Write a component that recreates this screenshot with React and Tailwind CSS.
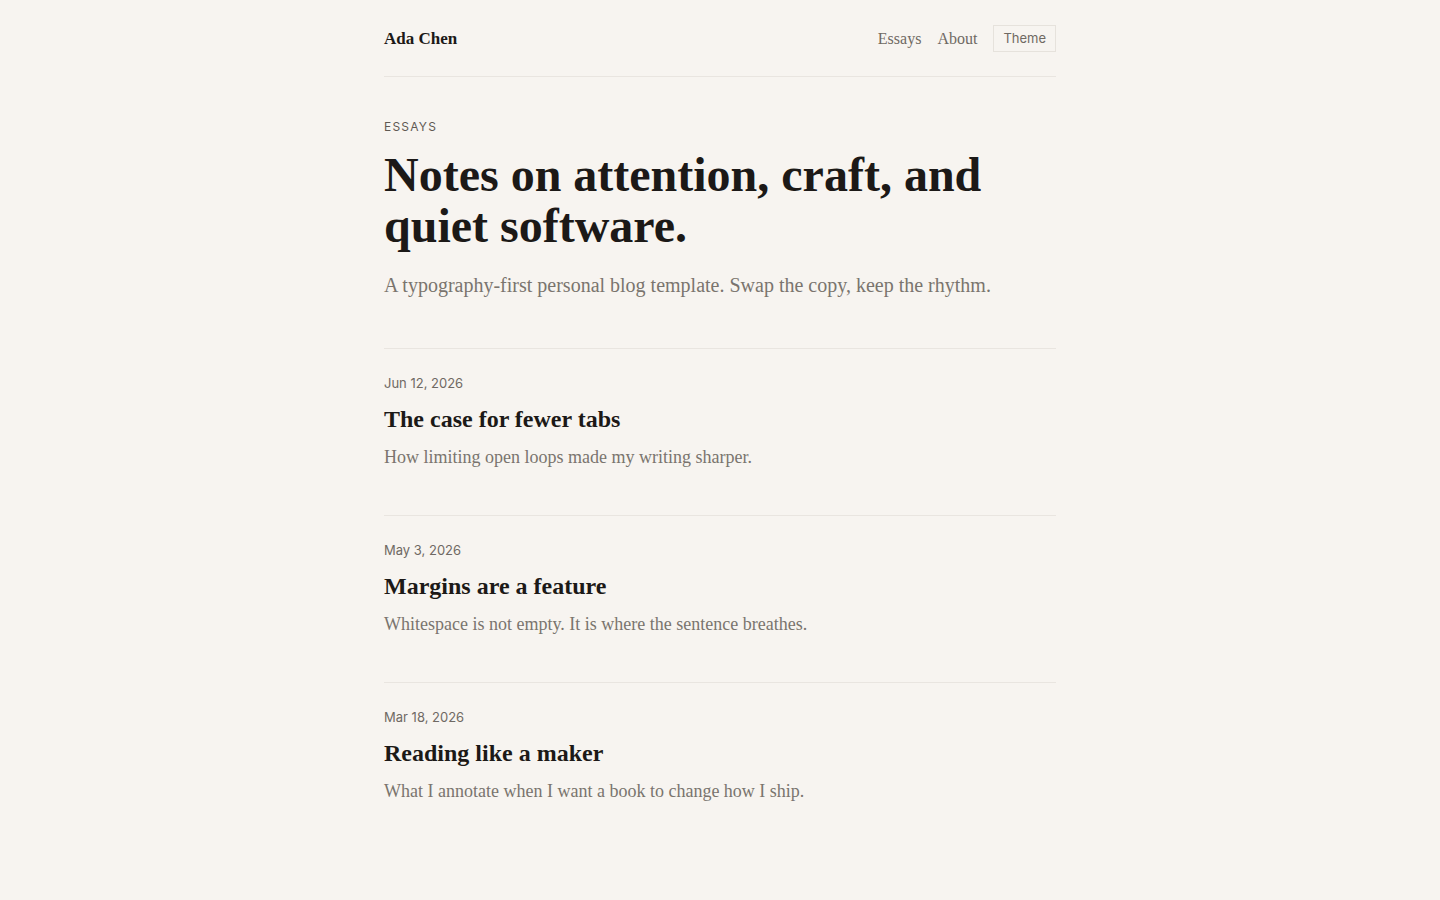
const serif = "font-['Liberation_Serif',_'Times_New_Roman',_serif]";
const sans = "font-['Inter',_'Liberation_Sans',_sans-serif]";

const posts = [
  {
    date: 'Jun 12, 2026',
    title: 'The case for fewer tabs',
    excerpt: 'How limiting open loops made my writing sharper.',
  },
  {
    date: 'May 3, 2026',
    title: 'Margins are a feature',
    excerpt: 'Whitespace is not empty. It is where the sentence breathes.',
  },
  {
    date: 'Mar 18, 2026',
    title: 'Reading like a maker',
    excerpt: 'What I annotate when I want a book to change how I ship.',
  },
];

function Header() {
  return (
    <header className="flex h-[77px] items-center justify-between border-b border-[#e9e5e0]">
      <a href="#" className={`${serif} pt-0.5 text-[17px] font-bold text-[#1c1917]`}>
        Ada Chen
      </a>
      <nav className="flex items-center gap-4">
        <a href="#" className={`${serif} pt-px text-base text-[#6f6963]`}>Essays</a>
        <a href="#" className={`${serif} pt-px text-base text-[#6f6963]`}>About</a>
        <button className={`${sans} flex h-[27px] items-center border border-[#e6e2dc] px-[9px] pt-px text-[13px] text-[#6f6963]`}>
          Theme
        </button>
      </nav>
    </header>
  );
}

function PostItem({ post }) {
  return (
    <article className="border-t border-[#e9e5e0] pt-6 pb-11">
      <p className={`${sans} text-[13px] leading-5 text-[#6f6963]`}>{post.date}</p>
      <h2 className={`${serif} mt-2.5 text-2xl leading-8 font-bold text-[#1c1917]`}>
        <a href="#">{post.title}</a>
      </h2>
      <p className={`${serif} mt-2 text-lg leading-7 text-[#7a746e]`}>{post.excerpt}</p>
    </article>
  );
}

export default function App() {
  return (
    <div className="min-h-screen bg-[#f7f4f0]">
      <div className="mx-auto max-w-2xl">
        <Header />
        <main>
          <section className="pt-[42px] pb-[49px]">
            <p className={`${sans} text-xs leading-4 tracking-widest text-[#5f5953]`}>ESSAYS</p>
            <h1 className={`${serif} mt-[14px] text-5xl leading-[51px] font-bold text-[#1c1917]`}>
              Notes on attention, craft, and quiet software.
            </h1>
            <p className={`${serif} mt-5 text-xl leading-7 text-[#7a746e]`}>
              A typography-first personal blog template. Swap the copy, keep the rhythm.
            </p>
          </section>
          <div>
            {posts.map((post) => (
              <PostItem key={post.title} post={post} />
            ))}
          </div>
        </main>
      </div>
    </div>
  );
}
